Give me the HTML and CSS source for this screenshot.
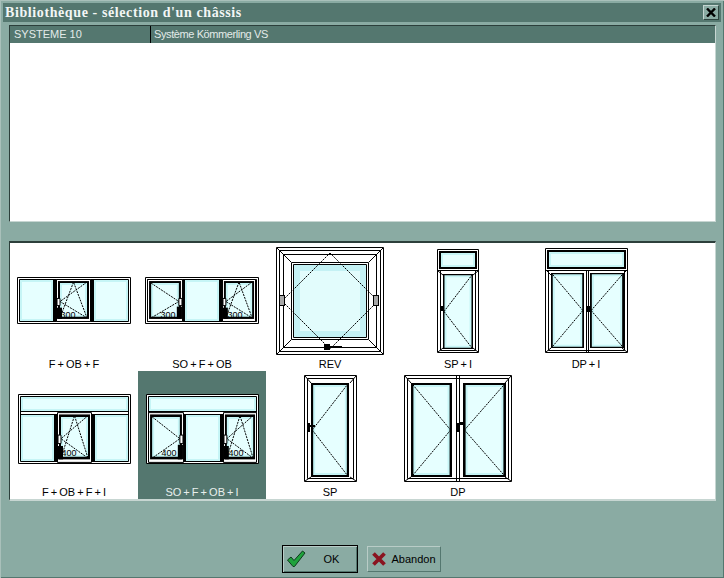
FILE: index.html
```html
<!DOCTYPE html>
<html lang="fr">
<head>
<meta charset="UTF-8">
<meta name="viewport" content="width=device-width, initial-scale=1.0">
<title>Bibliothèque - sélection d'un châssis</title>
<link rel="stylesheet" href="styles.css">
</head>
<body>
    <!-- shared window parts -->
    <svg class="defs">
        <symbol id="sash-ob" viewBox="0 0 35 42" preserveAspectRatio="none">
            <rect class="fr" x=".5" y=".5" width="34" height="41"/>
            <rect class="blk" x="2" y="2" width="31" height="37"/>
            <rect class="gl" x="5" y="5" width="25" height="31"/>
            <path class="ds" d="M4 38L17.5 3L31 38M31 3L4 22L31 38"/>
            <rect class="blk" x="1" y="28" width="5" height="11"/>
            <rect class="fr" x="1" y="19" width="3" height="7"/>
        </symbol>
        <symbol id="sash-so" viewBox="0 0 35 42" preserveAspectRatio="none">
            <rect class="fr" x=".5" y=".5" width="34" height="41"/>
            <rect class="blk" x="2" y="2" width="31" height="37"/>
            <rect class="gl" x="5" y="5" width="25" height="31"/>
            <path class="ds" d="M4 4L31 22L4 38"/>
            <rect class="blk" x="29" y="27" width="5" height="12"/>
            <rect class="fr" x="31" y="19" width="3" height="7"/>
        </symbol>
        <symbol id="leaf-left" viewBox="0 0 30 80" preserveAspectRatio="none">
            <rect class="blk" x="0" y="0" width="30" height="80"/>
            <rect class="gl" x="2.5" y="2.5" width="25" height="75"/>
            <path class="ds" d="M1 40L29 1M1 40L29 79"/>
        </symbol>
        <symbol id="leaf-right" viewBox="0 0 30 80" preserveAspectRatio="none">
            <rect class="blk" x="0" y="0" width="30" height="80"/>
            <rect class="gl" x="2.5" y="2.5" width="25" height="75"/>
            <path class="ds" d="M29 40L1 1M29 40L1 79"/>
        </symbol>
    </svg>

    <div class="window">
        <header class="titlebar">
            <h1 class="title">Bibliothèque - sélection d'un châssis</h1>
            <button class="close" type="button" aria-label="Fermer">
                <svg width="10" height="9" viewBox="0 0 10 9"><path class="close-x" d="M1 0.5L9 8.5M9 0.5L1 8.5"/></svg>
            </button>
        </header>

        <section class="panel list">
            <div class="list-row">
                <div class="list-code">SYSTEME 10</div>
                <div class="list-name">Système Kömmerling VS</div>
            </div>
        </section>

        <section class="panel gallery">
            <figure class="item">
                <div class="thumb">
                    <svg width="114" height="47" viewBox="0 0 114 47">
                        <rect class="fr" x=".5" y=".5" width="113" height="46"/>
                        <rect class="fr" x="2.5" y="2.5" width="109" height="42"/>
                        <rect class="gl" x="4" y="4" width="31" height="39"/>
                        <rect class="blk" x="36" y="3" width="3" height="41"/>
                        <use href="#sash-ob" x="39" y="2" width="35" height="43"/>
                        <rect class="blk" x="74" y="3" width="3" height="41"/>
                        <rect class="gl" x="78" y="4" width="32" height="39"/>
                        <text class="dim" x="51" y="41">300</text>
                    </svg>
                </div>
                <figcaption class="label">F + OB + F</figcaption>
            </figure>
            <figure class="item">
                <div class="thumb">
                    <svg width="114" height="47" viewBox="0 0 114 47">
                        <rect class="fr" x=".5" y=".5" width="113" height="46"/>
                        <rect class="fr" x="2.5" y="2.5" width="109" height="42"/>
                        <use href="#sash-so" x="2" y="2" width="36" height="43"/>
                        <rect class="blk" x="38" y="3" width="2" height="41"/>
                        <rect class="gl" x="41" y="4" width="32" height="39"/>
                        <rect class="blk" x="74" y="3" width="3" height="41"/>
                        <use href="#sash-ob" x="77" y="2" width="34" height="43"/>
                        <text class="dim" x="23" y="41">300</text>
                        <text class="dim" x="90" y="41">300</text>
                    </svg>
                </div>
                <figcaption class="label">SO + F + OB</figcaption>
            </figure>
            <figure class="item">
                <div class="thumb">
                    <svg width="108" height="108" viewBox="0 0 108 108">
                        <rect class="fr" x=".5" y=".5" width="107" height="107"/>
                        <rect class="fr" x="3.5" y="3.5" width="101" height="101"/>
                        <rect class="ln" x="7.5" y="7.5" width="93" height="93"/>
                        <path class="ln" d="M1 1L15 15M107 1L93 15M1 107L15 93M107 107L93 93"/>
                        <rect class="fr" x="15.5" y="15.5" width="77" height="77"/>
                        <rect class="ln" x="17.5" y="17.5" width="73" height="73"/>
                        <rect class="gl-wide" x="21" y="21" width="66" height="66"/>
                        <path class="ds" d="M54 6L102 54L54 102L6 54Z"/>
                        <rect class="hinge" x="3.5" y="48.5" width="5" height="10"/>
                        <rect class="hinge" x="97.5" y="48.5" width="5" height="10"/>
                        <path class="grip" d="M48 97h6v2h12v1h-12v3h-6z"/>
                    </svg>
                </div>
                <figcaption class="label">REV</figcaption>
            </figure>
            <figure class="item">
                <div class="thumb">
                    <svg width="42" height="104" viewBox="0 0 42 104">
                        <rect class="fr" x=".5" y=".5" width="41" height="103"/>
                        <rect class="ln" x="3.5" y="21.5" width="35" height="80"/>
                        <rect class="blk" x="2" y="2" width="38" height="18"/>
                        <rect class="gl" x="5" y="5" width="32" height="12"/>
                        <path class="ln" d="M1 21.5H41M1 22L6 26M41 22L36 26M1 103L6 99M41 103L36 99"/>
                        <use href="#leaf-left" x="6" y="25" width="30" height="75"/>
                        <rect class="blk" x="3" y="57" width="3" height="5"/>
                    </svg>
                </div>
                <figcaption class="label">SP + I</figcaption>
            </figure>
            <figure class="item">
                <div class="thumb">
                    <svg width="83" height="105" viewBox="0 0 83 105">
                        <rect class="fr" x=".5" y=".5" width="82" height="104"/>
                        <rect class="blk" x="2" y="2" width="79" height="19"/>
                        <rect class="gl" x="5" y="5" width="73" height="13"/>
                        <path class="ln" d="M1 22.5H82M41.5 22V104M43.5 22V104M3.5 22V102.5H79.5V22M1 22L6 27M82 22L77 27M1 104L6 100M82 104L77 100"/>
                        <use href="#leaf-left" x="45" y="25" width="34" height="75"/>
                        <use href="#leaf-right" x="6" y="25" width="33" height="75"/>
                        <rect class="blk" x="41" y="58" width="4" height="6"/>
                    </svg>
                </div>
                <figcaption class="label">DP + I</figcaption>
            </figure>

            <figure class="item">
                <div class="thumb">
                    <svg width="113" height="70" viewBox="0 0 113 70">
                        <rect class="fr" x=".5" y=".5" width="112" height="69"/>
                        <rect class="fr" x="2.5" y="2.5" width="108" height="65"/>
                        <rect class="gl" x="4" y="4" width="105" height="12"/>
                        <rect class="blk" x="2" y="17" width="109" height="1"/>
                        <rect class="blk" x="2" y="20" width="109" height="1"/>
                        <rect class="gl" x="4" y="22" width="31" height="44"/>
                        <rect class="blk" x="36" y="21" width="3" height="46"/>
                        <use href="#sash-ob" x="39" y="18" width="35" height="51"/>
                        <rect class="blk" x="74" y="21" width="3" height="46"/>
                        <rect class="gl" x="78" y="22" width="31" height="44"/>
                        <text class="dim" x="51" y="62">400</text>
                    </svg>
                </div>
                <figcaption class="label">F + OB + F + I</figcaption>
            </figure>
            <figure class="item selected">
                <div class="thumb">
                    <svg width="113" height="70" viewBox="0 0 113 70">
                        <rect class="fr" x=".5" y=".5" width="112" height="69"/>
                        <rect class="fr" x="2.5" y="2.5" width="108" height="65"/>
                        <rect class="gl" x="4" y="4" width="105" height="12"/>
                        <rect class="blk" x="2" y="17" width="109" height="1"/>
                        <rect class="blk" x="2" y="20" width="109" height="1"/>
                        <use href="#sash-so" x="2" y="18" width="36" height="51"/>
                        <rect class="blk" x="38" y="21" width="2" height="46"/>
                        <rect class="gl" x="41" y="22" width="32" height="44"/>
                        <rect class="blk" x="74" y="21" width="3" height="46"/>
                        <use href="#sash-ob" x="77" y="18" width="34" height="51"/>
                        <text class="dim" x="23" y="62">400</text>
                        <text class="dim" x="90" y="62">400</text>
                    </svg>
                </div>
                <figcaption class="label">SO + F + OB + I</figcaption>
            </figure>
            <figure class="item">
                <div class="thumb">
                    <svg width="53" height="107" viewBox="0 0 53 107">
                        <rect class="fr" x=".5" y=".5" width="52" height="106"/>
                        <rect class="ln" x="3.5" y="3.5" width="46" height="100"/>
                        <path class="ln" d="M1 1L7 8M52 1L46 8M1 106L7 102M52 106L46 102"/>
                        <use href="#leaf-left" x="7" y="8" width="38" height="94"/>
                        <path class="grip" d="M3 48h3v2h5v2h-5v5h-3z"/>
                    </svg>
                </div>
                <figcaption class="label">SP</figcaption>
            </figure>
            <figure class="item">
                <div class="thumb">
                    <svg width="108" height="107" viewBox="0 0 108 107">
                        <rect class="fr" x=".5" y=".5" width="107" height="106"/>
                        <rect class="ln" x="3.5" y="3.5" width="101" height="100"/>
                        <path class="ln" d="M52.5 1V106M55.5 1V106M1 1L7 8M107 1L101 8M1 106L7 102M107 106L101 102"/>
                        <use href="#leaf-right" x="7" y="8" width="41" height="94"/>
                        <use href="#leaf-left" x="59" y="8" width="43" height="94"/>
                        <path class="grip" d="M53 48h3v-1h5v3h-5v7h-3z"/>
                    </svg>
                </div>
                <figcaption class="label">DP</figcaption>
            </figure>
        </section>

        <footer class="actions">
            <button class="btn btn-default" type="button">
                <svg width="20" height="18" viewBox="0 0 20 18"><path class="check" d="M1.5 10L5 7L8 10.5L16.5 1L19 3L8.5 16.5H7Z"/></svg>
                <span class="btn-text">OK</span>
            </button>
            <button class="btn" type="button">
                <svg width="16" height="16" viewBox="0 0 16 16"><path class="cross" d="M2.5 2.5L13.5 13.5M13.5 2.5L2.5 13.5"/></svg>
                <span class="btn-text">Abandon</span>
            </button>
        </footer>
    </div>
</body>
</html>
```

FILE: styles.css
```css
* {
    box-sizing: border-box;
}

body {
    margin: 0;
    font-family: 'Liberation Sans', Arial, sans-serif;
    font-size: 11px;
    color: #000;
    background: #8aaba3;
}

.defs {
    display: none;
}

.window {
    display: flex;
    flex-direction: column;
    width: 724px;
    height: 578px;
    padding: 3px 3px 0;
    background: #8aaba3;
    box-shadow: inset 1px 1px 0 #a9c0ba, inset -1px -1px 0 #54776f;
}

.titlebar {
    display: flex;
    align-items: center;
    justify-content: space-between;
    height: 19px;
    padding: 0 2px 0 2px;
    background: #54776f;
}

.title {
    margin: 0;
    font-family: 'Liberation Serif', 'Times New Roman', serif;
    font-size: 14px;
    font-weight: bold;
    letter-spacing: 0.6px;
    color: #f2f6f5;
}

.close {
    display: flex;
    align-items: center;
    justify-content: center;
    width: 16px;
    height: 15px;
    padding: 0;
    background: #8aaba3;
    border: 1px solid;
    border-color: #c4d5d1 #2f4540 #2f4540 #c4d5d1;
}

.close-x {
    fill: none;
    stroke: #000;
    stroke-width: 2.4;
}

.panel {
    margin: 0 5px 0 6px;
    background: #fff;
    border: 1px solid;
    border-color: #2c3f3b #c7d6d2 #c7d6d2 #2c3f3b;
}

.list {
    height: 197px;
    margin-top: 3px;
}

.list-row {
    display: flex;
    height: 17px;
    line-height: 16px;
    color: #e3ebe9;
    background: #54776f;
}

.list-code {
    width: 141px;
    padding-left: 4px;
    border-right: 1px solid #000;
}

.list-name {
    padding-left: 3px;
    letter-spacing: -0.4px;
}

.gallery {
    display: grid;
    grid-template-columns: repeat(5, 128px);
    grid-auto-rows: 128px;
    height: 260px;
    margin-top: 19px;
    border-top-width: 2px;
    border-bottom-width: 2px;
}

.item {
    display: flex;
    flex-direction: column;
    align-items: center;
    margin: 0;
}

.thumb {
    display: flex;
    flex: 1;
    align-items: center;
    justify-content: center;
}

.thumb svg {
    display: block;
}

.label {
    height: 13px;
    line-height: 13px;
    word-spacing: -1px;
}

.selected {
    color: #e8efed;
    background: #54776f;
}

/* window drawing */
.fr {
    fill: #fff;
    stroke: #000;
    stroke-width: 1;
    vector-effect: non-scaling-stroke;
}

.ln {
    fill: none;
    stroke: #000;
    stroke-width: 1;
    vector-effect: non-scaling-stroke;
}

.blk,
.grip {
    fill: #000;
}

.gl {
    fill: #e6ffff;
    stroke: #c6f5f6;
    stroke-width: 2;
    vector-effect: non-scaling-stroke;
}

.gl-wide {
    fill: #e2fcfc;
    stroke: #c4f1f4;
    stroke-width: 6;
}

.ds {
    fill: none;
    stroke: #000;
    stroke-width: 1;
    stroke-dasharray: 2 1;
    vector-effect: non-scaling-stroke;
}

.hinge {
    fill: #a8a8a8;
    stroke: #000;
}

.dim {
    font-size: 9px;
    text-anchor: middle;
    fill: #000;
}

.actions {
    display: flex;
    flex: 1;
    align-items: flex-end;
    justify-content: center;
    gap: 9px;
    padding: 0 1px 5px 0;
}

.btn {
    display: flex;
    align-items: center;
    width: 74px;
    height: 26px;
    margin-bottom: 1px;
    padding: 0 0 0 3px;
    font-family: inherit;
    font-size: 11px;
    background: #8aaba3;
    border: 1px solid;
    border-color: #b9ccc7 #54776f #54776f #b9ccc7;
}

.btn-default {
    width: 76px;
    height: 28px;
    margin-bottom: 0;
    border: 1px solid #000;
    box-shadow: inset 1px 1px 0 #b9ccc7, inset -1px -1px 0 #54776f;
}

.btn-text {
    flex: 1;
    text-align: center;
}

.check {
    fill: #1fa23c;
    stroke: #0d3b1c;
    stroke-width: 1;
}

.cross {
    fill: none;
    stroke: #8a1420;
    stroke-width: 3.8;
}
```
